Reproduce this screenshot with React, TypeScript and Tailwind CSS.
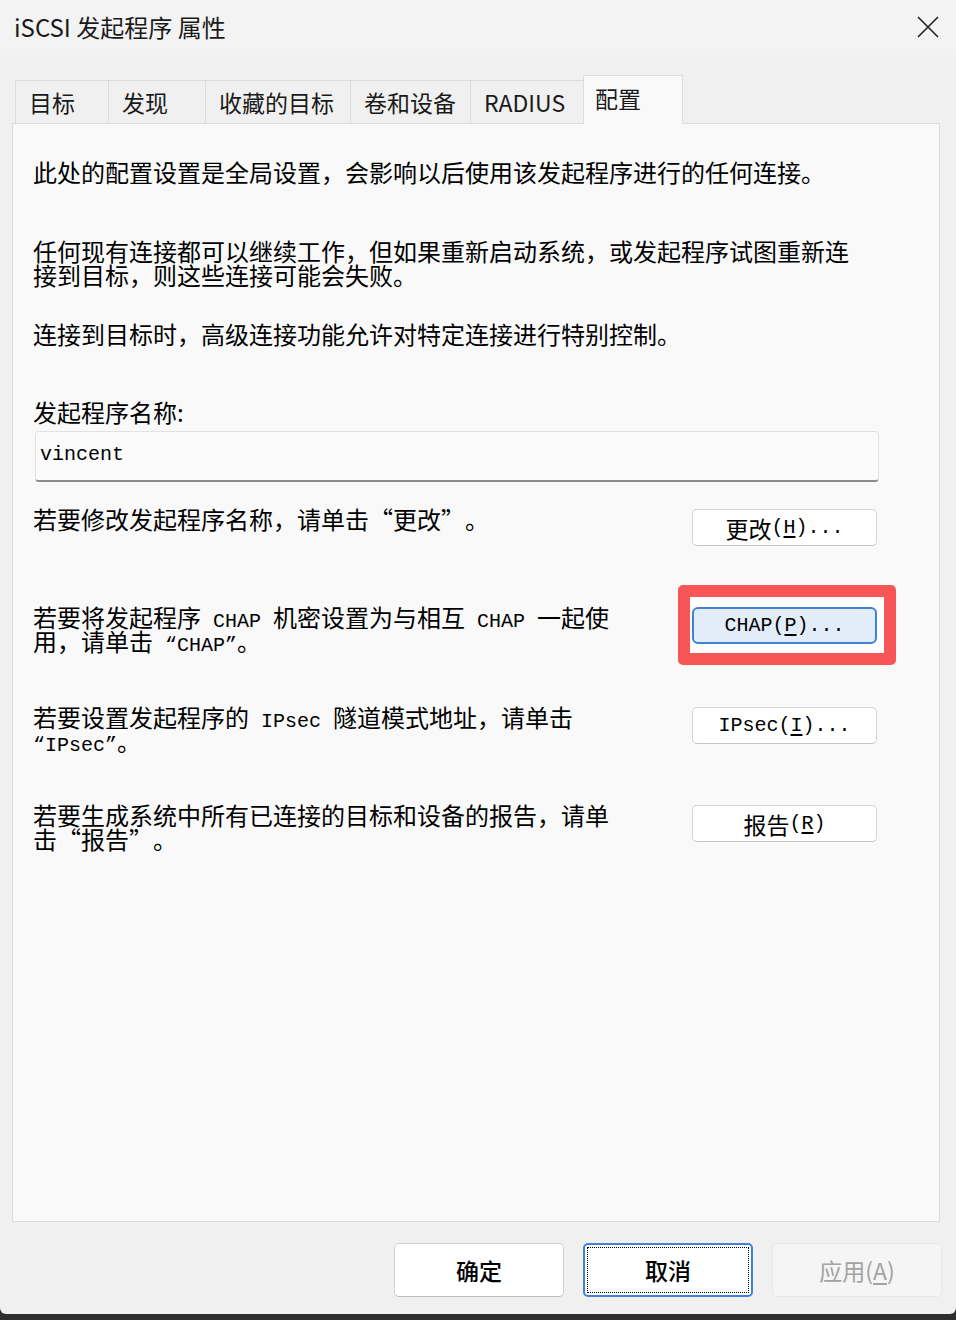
const ui = "font-['Noto_Sans_CJK_SC','Noto_Sans',sans-serif]";
const mono = "font-['Liberation_Mono','Noto_Sans_CJK_SC',monospace] text-[20px]";

const M = ({ children }: { children: React.ReactNode }) => (
  <span className={`${mono} leading-[0px]`}>{children}</span>
);

const U = ({ children }: { children: React.ReactNode }) => (
  <span className="underline underline-offset-[3px]">{children}</span>
);

const tabs = [
  { label: "目标", w: "w-[94px]" },
  { label: "发现", w: "w-[98px]" },
  { label: "收藏的目标", w: "w-[146px]" },
  { label: "卷和设备", w: "w-[121px]" },
  { label: "RADIUS", w: "w-[114px]" },
];

const SideButton = ({ children, focus }: { children: React.ReactNode; focus?: boolean }) => (
  <div
    className={
      focus
        ? "w-[185px] h-[37px] rounded-[6px] border-2 border-[#3d82d6] bg-[#e3edf9] flex items-center justify-center text-[23px] leading-[24px] text-black"
        : "w-[185px] h-[37px] rounded-[5px] border border-[#d4d4d4] border-b-[#c2c2c2] bg-white flex items-center justify-center text-[23px] leading-[24px] text-black"
    }
  >
    {children}
  </div>
);

const Row = ({ h, children, button }: { h: string; children: React.ReactNode; button: React.ReactNode }) => (
  <div className={`flex items-start ${h}`}>
    <p className="flex-1 whitespace-nowrap">{children}</p>
    <div className="mt-[2px] mr-[62px]">{button}</div>
  </div>
);

export default function App() {
  return (
    <div lang="zh-CN" className={`w-[956px] h-[1320px] bg-[#2e2e2e] ${ui} [text-spacing-trim:space-all]`}>
      <div className="h-[1314px] bg-[#f0f0f0] rounded-b-[6px] flex flex-col overflow-hidden">
        {/* title bar */}
        <div className="h-[55px] bg-[#f3f3f3] flex items-center justify-between pl-[14px] pr-[17px]">
          <span className="text-[24px] text-[#1a1a1a] -mt-[2px]">iSCSI 发起程序 属性</span>
          <svg width="22" height="22" viewBox="0 0 22 22" className="-mt-[2px]">
            <path d="M1 1 L21 21 M21 1 L1 21" stroke="#1f1f1f" strokeWidth="1.6" fill="none" />
          </svg>
        </div>

        {/* tabs */}
        <div className="mt-[20px] h-[48px] flex items-end pl-[15px]">
          {tabs.map((t, i) => (
            <div
              key={t.label}
              className={`${t.w} h-[43px] flex items-center pl-[13px] border border-b-0 border-[#dcdcdc] text-[23px] text-[#1a1a1a] ${i > 0 ? "-ml-px" : ""}`}
            >
              {t.label}
            </div>
          ))}
          <div className="w-[100px] h-[49px] -mb-px -ml-px relative z-10 flex items-center pl-[11px] pb-[3px] bg-[#f9f9f9] border border-b-0 border-[#dcdcdc] text-[23px] text-[#1a1a1a]">
            配置
          </div>
        </div>

        {/* panel */}
        <div className="ml-[12px] w-[928px] h-[1099px] border border-[#dcdcdc] bg-[#f9f9f9] pl-[20px] pt-[36px] text-[24px] leading-[24px] text-black">
          <p className="whitespace-nowrap">
            此处的配置设置是全局设置，会影响以后使用该发起程序进行的任何连接。
          </p>
          <p className="mt-[55px] whitespace-nowrap">
            任何现有连接都可以继续工作，但如果重新启动系统，或发起程序试图重新连
            <br />
            接到目标，则这些连接可能会失败。
          </p>
          <p className="mt-[35px] whitespace-nowrap">
            连接到目标时，高级连接功能允许对特定连接进行特别控制。
          </p>
          <p className="mt-[54px]">发起程序名称:</p>
          <div className="mt-[7px] ml-[2px] w-[844px] h-[51px] rounded-[4px] border border-[#e2e2e2] border-b-2 border-b-[#8c8c8c] bg-[#fbfbfb] pl-[4px] pt-[6px]">
            <span className={`${mono} leading-[24px]`}>vincent</span>
          </div>

          <div className="mt-[25px]">
            <Row
              h="h-[98px]"
              button={
                <SideButton>
                  更改<M>(<U>H</U>)...</M>
                </SideButton>
              }
            >
              若要修改发起程序名称，请单击“更改”。
            </Row>

            <Row
              h="h-[100px]"
              button={
                <div className="relative">
                  <span className="absolute -left-[14px] -top-[22px] -right-[19px] -bottom-[21px] rounded-[5px] border-[12px] border-[#f85656] bg-white" />
                  <div className="relative">
                    <SideButton focus>
                      <M>
                        CHAP(<U>P</U>)...
                      </M>
                    </SideButton>
                  </div>
                </div>
              }
            >
              若要将发起程序<M> CHAP </M>机密设置为与相互<M> CHAP </M>一起使
              <br />
              用，请单击<M> “CHAP”</M>。
            </Row>

            <Row
              h="h-[98px]"
              button={
                <SideButton>
                  <M>
                    IPsec(<U>I</U>)...
                  </M>
                </SideButton>
              }
            >
              若要设置发起程序的<M> IPsec </M>隧道模式地址，请单击
              <br />
              <M>“IPsec”</M>。
            </Row>

            <Row
              h="h-[98px]"
              button={
                <SideButton>
                  报告<M>(<U>R</U>)</M>
                </SideButton>
              }
            >
              若要生成系统中所有已连接的目标和设备的报告，请单
              <br />
              击“报告”。
            </Row>
          </div>
        </div>

        {/* footer */}
        <div className="mt-[21px] flex justify-end gap-[19px] pr-[14px] text-[23px]">
          <button className="w-[170px] h-[54px] rounded-[5px] border border-[#d2d2d2] border-b-[#bdbdbd] bg-white text-black font-medium">
            确定
          </button>
          <button className="w-[170px] h-[54px] rounded-[5px] border-2 border-[#3d82d6] bg-white p-[2px]">
            <span className="flex w-full h-full items-center justify-center border border-dotted border-black text-black font-medium">
              取消
            </span>
          </button>
          <button className="w-[170px] h-[54px] rounded-[5px] border border-[#e6e6e6] bg-[#f5f5f5] text-[#a3a3a3]">
            应用(<U>A</U>)
          </button>
        </div>
      </div>
    </div>
  );
}
